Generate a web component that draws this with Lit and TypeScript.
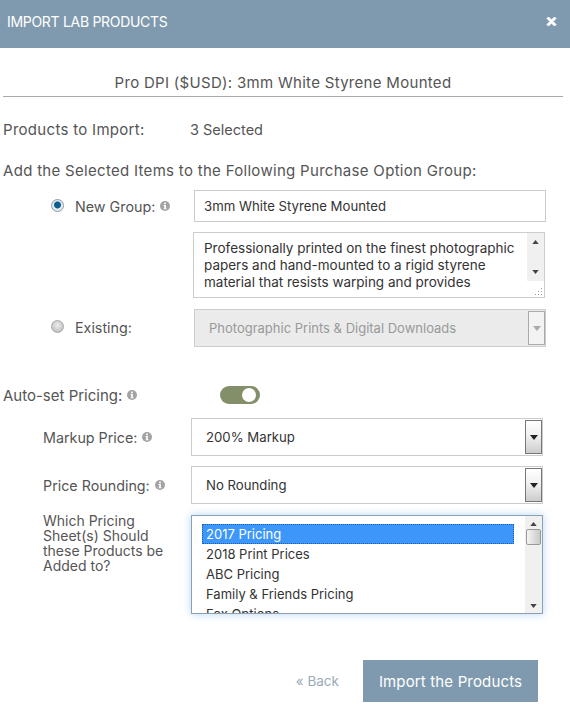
import { LitElement, html, css, svg } from "lit";
import { customElement } from "lit/decorators.js";

const info = html`<svg class="info" viewBox="0 0 10 10" width="10" height="10"><circle cx="5" cy="5" r="5" fill="#a3a3a3"/><rect x="4.1" y="1.6" width="1.8" height="1.6" fill="#fff"/><path d="M3.5 4h2.4v3.4h.7v.9H3.5v-.9h.7V4.9h-.7z" fill="#fff"/></svg>`;
const up = svg`<path d="M0 5L4 0L8 5z"/>`;
const down = svg`<path d="M0 0L8 0L4 5z"/>`;
const arrow = (shape: unknown, fill: string) => html`<svg class="arrow" viewBox="0 0 8 5" width="8" height="5" fill=${fill}>${shape}</svg>`;

@customElement("app-root")
export class AppRoot extends LitElement {
  static styles = css`
    :host { display: block; width: 570px; height: 713px; overflow: hidden; background: #fff; color: #555; font-family: Inter, Roboto, "Liberation Sans", sans-serif; font-size: 15px; letter-spacing: 0.3px; }
    * { box-sizing: border-box; }
    .header { height: 48px; background: #7f9aae; color: #fff; display: flex; align-items: center; justify-content: space-between; padding: 0 13px 6px 7px; font-size: 14px; letter-spacing: -0.3px; }
    .close { width: 11px; height: 11px; display: block; }
    .main { padding: 0 7px 0 3px; }
    .title { margin-top: 25px; height: 24px; line-height: 20px; text-align: center; border-bottom: 1px solid #aaa; }
    .products { display: flex; height: 20px; line-height: 20px; margin-top: 23px; }
    .products span:first-child { width: 187px; }
    .products span:last-child { font-size: 14.5px; letter-spacing: 0; }
    .add { margin-top: 21px; line-height: 20px; height: 20px; }
    .group { margin: 0 17px 0 47px; display: grid; grid-template-columns: 144px 352px; }
    .group.first { margin-top: 9px; }
    .lbl { display: flex; align-items: center; gap: 5px; font-size: 14.3px; letter-spacing: 0; }
    .group .lbl { padding-left: 1px; }
    .radio { width: 13px; height: 13px; border-radius: 50%; margin: -1px 6px 0 0; background: radial-gradient(circle at 50% 40%, #ececec, #b5b5b5); border: 1px solid #a8a8a8; flex: none; }
    .radio.on { background: radial-gradient(circle at 50% 45%, #0d5f8d 0 3px, #e6ebf0 4px); border-color: #8a9aa8; }
    .info { display: block; flex: none; }
    .input { height: 32px; border: 1px solid #ccc; padding: 0 9px; display: flex; align-items: center; color: #333; font-size: 13.2px; letter-spacing: 0; }
    .ta-row { grid-column: 2; margin-top: 10px; margin-left: -1px; width: 352px; height: 66px; border: 1px solid #ccc; display: flex; color: #333; font-size: 13.5px; line-height: 17px; letter-spacing: 0; }
    .ta-text { flex: 1; padding: 7px 0 0 10px; overflow: hidden; }
    .ta-bar { width: 17px; display: flex; flex-direction: column; }
    .ta-track { height: 48px; background: #f0f0f0; display: flex; flex-direction: column; justify-content: space-between; align-items: center; padding: 7px 0; }
    .ta-track .arrow, .bar .arrow { width: 7px; height: 4px; }
    .grip { margin: auto 2px 2px auto; width: 8px; height: 8px; background: radial-gradient(circle, #999 0 .6px, transparent 1px) 0 0 / 3px 3px; clip-path: polygon(100% 0, 100% 100%, 0 100%); }
    .existing { margin-top: 11px; }
    .existing .lbl { padding-bottom: 2px; }
    .select { height: 38px; border: 1px solid #ccc; display: flex; align-items: center; padding-left: 14px; color: #333; font-size: 13.2px; letter-spacing: 0; }
    .select .txt { flex: 1; }
    .disabled { background: #ebebeb; color: #999; font-size: 13px; }
    .btn { width: 17px; align-self: stretch; margin: 1px 0; border: 1px solid #777; background: linear-gradient(#fff, #f1f1f1 45%, #ccc); display: flex; align-items: center; justify-content: center; }
    .disabled .btn { background: #f3f3f3; border-color: #aaa; }
    .auto { display: flex; align-items: center; margin-top: 36px; height: 24px; }
    .auto .lbl { width: 217px; font-size: 15px; }
    .toggle { width: 40px; height: 18px; border-radius: 9px; background: #838f68; position: relative; }
    .toggle::after { content: ""; position: absolute; right: 4px; top: 2px; width: 14px; height: 14px; border-radius: 50%; background: #fff; }
    .pricing { margin: 11px 0 0 40px; display: grid; grid-template-columns: 148px 352px; row-gap: 10px; }
    .sheet-label { line-height: 15px; margin-top: -1px; padding-right: 12px; font-size: 14px; letter-spacing: 0; }
    .list { height: 99px; margin-top: 1px; border: 1px solid #8ba0b2; box-shadow: 0 0 8px rgba(120, 180, 240, .55); display: flex; overflow: hidden; color: #333; font-size: 13px; letter-spacing: 0; }
    .opts { flex: 1; padding: 8px 11px 0 10px; line-height: 20px; overflow: hidden; }
    .opt { height: 20px; padding-left: 4px; }
    .opt.sel { background: #3d97fb; color: #fff; outline: 1px dotted #1f5fa8; outline-offset: -1px; }
    .bar { width: 17px; background: #f0f0f0; display: flex; flex-direction: column; align-items: center; padding: 6px 0 5px; }
    .thumb { width: 15px; height: 16px; margin-top: 3px; border: 1px solid #999; border-radius: 2px; background: linear-gradient(90deg, #f4f4f4, #c9c9c9); }
    .bar .arrow:last-child { margin-top: auto; }
    .footer { display: flex; justify-content: flex-end; align-items: center; gap: 24px; margin: 46px 25px 0 0; }
    .back { color: #9aabb8; font-size: 13.5px; letter-spacing: 0; }
    .import { width: 175px; height: 42px; background: #7f9aae; color: #fff; display: flex; align-items: center; justify-content: center; letter-spacing: .15px; }
  `;

  render() {
    return html`
      <div class="header">
        <span>IMPORT LAB PRODUCTS</span>
        <svg class="close" viewBox="0 0 11 11"><path d="M2.5 1L5.5 4L8.5 1L10 2.5L7 5.5L10 8.5L8.5 10L5.5 7L2.5 10L1 8.5L4 5.5L1 2.5z" fill="#fff" stroke="#fff" stroke-linejoin="round"/></svg>
      </div>
      <div class="main">
        <div class="title">Pro DPI ($USD): 3mm White Styrene Mounted</div>
        <div class="products"><span>Products to Import:</span><span>3 Selected</span></div>
        <div class="add">Add the Selected Items to the Following Purchase Option Group:</div>
        <div class="group first">
          <div class="lbl"><span class="radio on"></span><span>New Group:</span>${info}</div>
          <div class="input">3mm White Styrene Mounted</div>
          <div class="ta-row">
            <div class="ta-text">Professionally printed on the finest photographic papers and hand-mounted to a rigid styrene material that resists warping and provides</div>
            <div class="ta-bar">
              <div class="ta-track">${arrow(up, "#444")}${arrow(down, "#444")}</div>
              <div class="grip"></div>
            </div>
          </div>
        </div>
        <div class="group existing">
          <div class="lbl"><span class="radio"></span><span>Existing:</span></div>
          <div class="select disabled"><span class="txt">Photographic Prints &amp; Digital Downloads</span><span class="btn">${arrow(down, "#aaa")}</span></div>
        </div>
        <div class="auto"><div class="lbl"><span>Auto-set Pricing:</span>${info}</div><div class="toggle"></div></div>
        <div class="pricing">
          <div class="lbl"><span>Markup Price:</span>${info}</div>
          <div class="select"><span class="txt">200% Markup</span><span class="btn">${arrow(down, "#222")}</span></div>
          <div class="lbl"><span>Price Rounding:</span>${info}</div>
          <div class="select"><span class="txt">No Rounding</span><span class="btn">${arrow(down, "#222")}</span></div>
          <div class="sheet-label">Which Pricing Sheet(s) Should these Products be Added to?</div>
          <div class="list">
            <div class="opts">
              <div class="opt sel">2017 Pricing</div>
              <div class="opt">2018 Print Prices</div>
              <div class="opt">ABC Pricing</div>
              <div class="opt">Family &amp; Friends Pricing</div>
              <div class="opt">Fox Options</div>
            </div>
            <div class="bar">${arrow(up, "#444")}<div class="thumb"></div>${arrow(down, "#444")}</div>
          </div>
        </div>
        <div class="footer"><span class="back">« Back</span><div class="import">Import the Products</div></div>
      </div>
    `;
  }
}
